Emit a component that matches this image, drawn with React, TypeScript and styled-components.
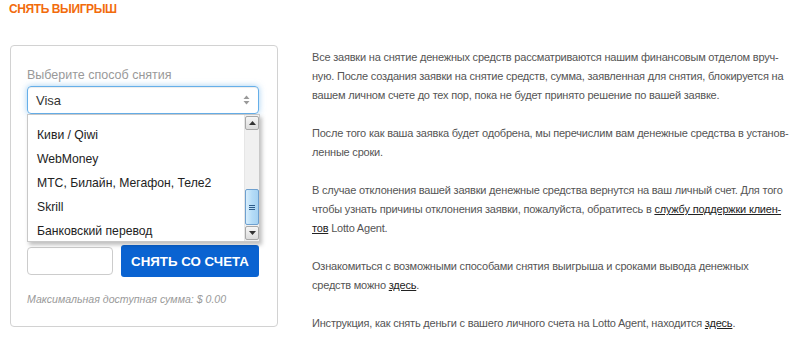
import React from "react";
import styled, { createGlobalStyle } from "styled-components";

const GlobalStyle = createGlobalStyle`
    body {
        margin: 0;
        background: #fff;
        font-family: "Liberation Sans", Arial, sans-serif;
    }
`;

const methods = ["Киви / Qiwi", "WebMoney", "МТС, Билайн, Мегафон, Теле2", "Skrill", "Банковский перевод"];

const App = () => {
    return (
        <>
            <GlobalStyle />
            <Page>
                <Title>Снять выигрыш</Title>
                <Content>
                    <Card>
                        <FieldLabel>Выберите способ снятия</FieldLabel>
                        <SelectWrap>
                            <SelectBox>
                                Visa
                                <svg width="7" height="10" viewBox="0 0 7 10">
                                    <path d="M3.5 0.5 L6.5 4 L0.5 4 Z" fill="#999" />
                                    <path d="M3.5 9.5 L6.5 6 L0.5 6 Z" fill="#999" />
                                </svg>
                            </SelectBox>
                            <Dropdown>
                                <OptionList>
                                    {methods.map((m) => (
                                        <OptionItem key={m}>{m}</OptionItem>
                                    ))}
                                </OptionList>
                                <ScrollBar>
                                    <ScrollButton>
                                        <svg width="7" height="4" viewBox="0 0 7 4"><path d="M3.5 0 L7 4 L0 4 Z" fill="#333" /></svg>
                                    </ScrollButton>
                                    <ScrollTrack>
                                        <ScrollThumb>
                                            <Grip /><Grip /><Grip />
                                        </ScrollThumb>
                                    </ScrollTrack>
                                    <ScrollButton>
                                        <svg width="7" height="4" viewBox="0 0 7 4"><path d="M0 0 L7 0 L3.5 4 Z" fill="#333" /></svg>
                                    </ScrollButton>
                                </ScrollBar>
                            </Dropdown>
                        </SelectWrap>
                        <HiddenField />
                        <AmountRow>
                            <AmountInput type="text" />
                            <SubmitButton>Снять со счета</SubmitButton>
                        </AmountRow>
                        <MaxNote>Максимальная доступная сумма: $ 0.00</MaxNote>
                    </Card>

                    <Info>
                        <Para>
                            Все заявки на снятие денежных средств рассматриваются нашим финансовым отделом вруч-<br />
                            ную. После создания заявки на снятие средств, сумма, заявленная для снятия, блокируется на<br />
                            вашем личном счете до тех пор, пока не будет принято решение по вашей заявке.
                        </Para>
                        <Para>
                            После того как ваша заявка будет одобрена, мы перечислим вам денежные средства в установ-<br />
                            ленные сроки.
                        </Para>
                        <Para>
                            В случае отклонения вашей заявки денежные средства вернутся на ваш личный счет. Для того<br />
                            чтобы узнать причины отклонения заявки, пожалуйста, обратитесь в <InfoLink href="#">службу поддержки клиен-<br />тов</InfoLink> Lotto Agent.
                        </Para>
                        <Para>
                            Ознакомиться с возможными способами снятия выигрыша и сроками вывода денежных<br />
                            средств можно <InfoLink href="#">здесь</InfoLink>.
                        </Para>
                        <Para>
                            Инструкция, как снять деньги с вашего личного счета на Lotto Agent, находится <InfoLink href="#">здесь</InfoLink>.
                        </Para>
                    </Info>
                </Content>
            </Page>
        </>
    );
};

export default App;

const Page = styled.div`
    width: 800px;
    height: 345px;
    padding: 0 9px;
    box-sizing: border-box;
    overflow: hidden;
`;

const Title = styled.h2`
    margin: 0;
    font-family: "Liberation Sans", Arial, sans-serif;
    font-weight: 700;
    font-size: 12px;
    line-height: 18px;
    color: #f26b0c;
    text-transform: uppercase;
    letter-spacing: -0.4px;
`;

const Content = styled.div`
    display: flex;
    align-items: flex-start;
    margin-top: 27px;
`;

const Card = styled.div`
    position: relative;
    margin-left: 1px;
    width: 268px;
    box-sizing: border-box;
    border: 1px solid #d2d2d2;
    border-radius: 4px;
    padding: 19px 18px 18px 16px;
`;

const FieldLabel = styled.div`
    font-size: 12.5px;
    line-height: 20px;
    color: #999;
    margin-bottom: 1px;
`;

const SelectWrap = styled.div`
    position: relative;
`;

const SelectBox = styled.div`
    display: flex;
    align-items: center;
    justify-content: space-between;
    height: 28px;
    box-sizing: border-box;
    padding: 0 8px;
    border: 1px solid #66afe9;
    border-radius: 4px;
    box-shadow: inset 0 1px 1px rgba(0, 0, 0, 0.075), 0 0 6px rgba(102, 175, 233, 0.6);
    font-size: 13px;
    color: #333;
`;

const Dropdown = styled.div`
    position: absolute;
    top: 28px;
    left: 0;
    width: 233px;
    height: 128px;
    box-sizing: border-box;
    display: flex;
    background: #fff;
    border: 1px solid #c8c8c8;
    box-shadow: 2px 3px 4px rgba(0, 0, 0, 0.25);
    z-index: 2;
`;

const OptionList = styled.div`
    flex: 1;
    overflow: hidden;
    padding-top: 8px;
`;

const OptionItem = styled.div`
    height: 24px;
    line-height: 24px;
    padding-left: 9px;
    font-size: 12.2px;
    color: #222;
    white-space: nowrap;
`;

const ScrollBar = styled.div`
    width: 14px;
    display: flex;
    flex-direction: column;
    padding: 1px 0;
    background: #f0f0f0;
    border-left: 1px solid #e6e6e6;
`;

const ScrollButton = styled.div`
    height: 12px;
    display: flex;
    align-items: center;
    justify-content: center;
    border: 1px solid #a8a8a8;
    border-radius: 2px;
    background: linear-gradient(#f6f6f6, #dcdcdc);
`;

const ScrollTrack = styled.div`
    flex: 1;
    display: flex;
    flex-direction: column;
    justify-content: flex-end;
    padding-bottom: 1px;
`;

const ScrollThumb = styled.div`
    height: 36px;
    box-sizing: border-box;
    display: flex;
    flex-direction: column;
    align-items: center;
    justify-content: center;
    gap: 1px;
    border: 1px solid #6ea0cf;
    border-radius: 2px;
    background: linear-gradient(90deg, #d8eefc, #b5dcf7 50%, #a6d2f2);
`;

const Grip = styled.div`
    width: 6px;
    height: 1px;
    background: #2f5c89;
`;

const HiddenField = styled.div`
    height: 28px;
    margin-top: 46px;
    margin-right: -1px;
    box-sizing: border-box;
    border: 1px solid #ccc;
    border-radius: 4px;
`;

const AmountRow = styled.div`
    display: flex;
    align-items: center;
    gap: 8px;
    margin-top: 57px;
`;

const AmountInput = styled.input`
    width: 86px;
    height: 28px;
    box-sizing: border-box;
    border: 1px solid #ccc;
    border-radius: 4px;
    padding: 0 8px;
    outline: none;
`;

const SubmitButton = styled.button`
    width: 139px;
    height: 32px;
    border: none;
    border-radius: 3px;
    background: #0a63d1;
    color: #fff;
    font-family: "Liberation Sans", Arial, sans-serif;
    font-weight: 700;
    font-size: 13.3px;
    text-transform: uppercase;
    padding: 0;
`;

const MaxNote = styled.div`
    margin-top: 13px;
    font-size: 10.6px;
    line-height: 18px;
    font-style: italic;
    color: #9a9a9a;
`;

const Info = styled.div`
    margin-left: 34px;
    padding-top: 3px;
    font-size: 11px;
    letter-spacing: -0.2px;
    line-height: 19px;
    color: #555;
    white-space: nowrap;
`;

const Para = styled.p`
    margin: 0 0 19px;
`;

const InfoLink = styled.a`
    color: #222;
    text-decoration: underline;
`;
